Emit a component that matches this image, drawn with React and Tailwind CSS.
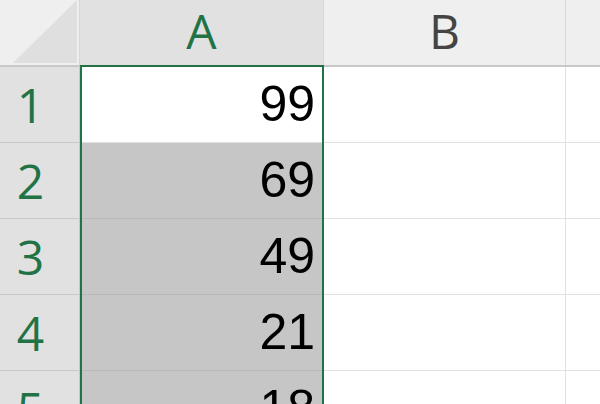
import React from "react";

const rows = [
  { n: 1, v: "99", active: true },
  { n: 2, v: "69" },
  { n: 3, v: "49" },
  { n: 4, v: "21" },
  { n: 5, v: "18" },
];

export default function App() {
  return (
    <div className="relative w-[600px] h-[404px] overflow-hidden bg-white">
      {/* header row */}
      <div className="flex h-[67px] border-b-2 border-[#c8c8c8]">
        <div className="relative w-[80px] shrink-0 bg-[#efefef] border-r border-[#d6d6d6]">
          <svg className="absolute left-0 top-0" width="79" height="65" viewBox="0 0 79 65">
            <polygon points="13,63 77,0 77,63" fill="#dfdfdf" />
          </svg>
        </div>
        <div
          className="w-[244px] shrink-0 bg-[#e1e1e1] border-r border-[#d6d6d6] flex items-center justify-center pb-[4px] text-[#217346] text-[48px] leading-[1.2]"
          style={{ fontFamily: '"Open Sans", sans-serif' }}
        >
          <span>A</span>
        </div>
        <div
          className="w-[242px] shrink-0 bg-[#efefef] border-r border-[#d6d6d6] flex items-center justify-center pb-[4px] text-[#444444] text-[48px] leading-[1.2]"
          style={{ fontFamily: '"Open Sans", sans-serif' }}
        >
          <span>B</span>
        </div>
        <div className="flex-1 bg-[#efefef]" />
      </div>

      {rows.map((r) => (
        <div key={r.n} className="flex h-[76px]">
          <div
            className="w-[80px] shrink-0 bg-[#e1e1e1] border-r border-b border-[#c8c8c8] flex items-center justify-center pr-[18px] text-[#217346] text-[48px] leading-[1.2]"
            style={{ fontFamily: '"Open Sans", sans-serif' }}
          >
            {r.n}
          </div>
          <div
            className={
              r.active
                ? "w-[244px] shrink-0 bg-white border-b border-[#e1e1e1] flex items-center justify-end pr-[9px] text-black text-[50px] leading-[1.15]"
                : "w-[244px] shrink-0 bg-[#c6c6c6] border-b border-[#b9b9b9] flex items-center justify-end pr-[9px] text-black text-[50px] leading-[1.15]"
            }
            style={{ fontFamily: '"Liberation Sans", Arial, sans-serif' }}
          >
            {r.v}
          </div>
          <div className="w-[242px] shrink-0 border-r border-b border-[#e1e1e1]" />
          <div className="flex-1 border-b border-[#e1e1e1]" />
        </div>
      ))}

      {/* selection border */}
      <div className="absolute left-[80px] top-[65px] w-[244px] h-[400px] border-2 border-[#217346]" />
    </div>
  );
}
